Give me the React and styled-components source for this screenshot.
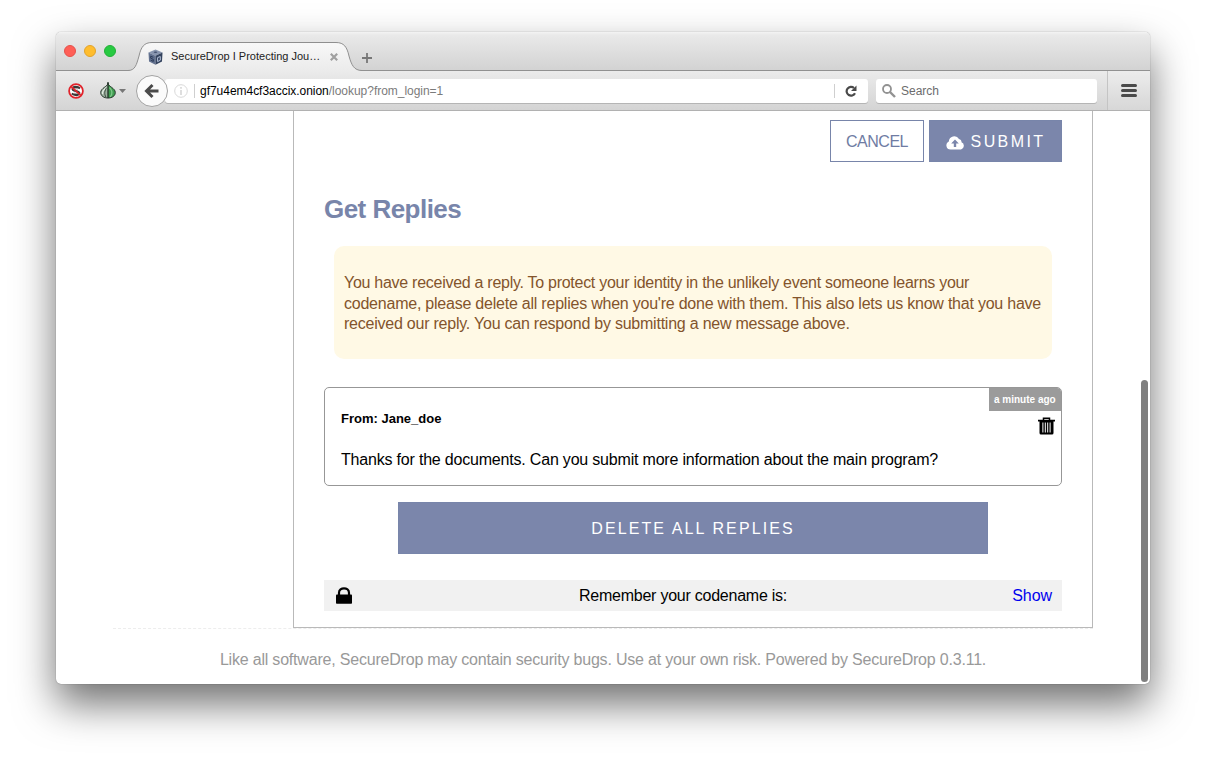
import React from "react";
import styled, { createGlobalStyle } from "styled-components";

const Global = createGlobalStyle`
  * { box-sizing: border-box; }
  html, body { margin: 0; height: 100%; background: #fff; overflow: hidden; }
  body { font-family: "Liberation Sans", Arial, sans-serif; }
  svg { display: block; flex: none; }
`;

const Desktop = styled.div`
  width: 1206px;
  height: 764px;
  padding: 32px 56px 0;
  overflow: hidden;
  background: #fff;
`;

const Window = styled.div`
  width: 1094px;
  height: 652px;
  display: flex;
  flex-direction: column;
  border-radius: 5px;
  background: #fff;
  box-shadow: 0 0 1px rgba(0, 0, 0, 0.55), 0 20px 40px rgba(0, 0, 0, 0.56);
  overflow: clip;
`;

const TitleBar = styled.div`
  height: 39px;
  flex: none;
  display: flex;
  padding-left: 8px;
  background: linear-gradient(#f3f3f3, #e9e9e9 8%, #d2d2d2);
  box-shadow: inset 0 -1px #919191;
`;

const Lights = styled.div`
  display: flex;
  gap: 8px;
  padding-top: 13px;
  width: 64px;
`;

const Light = styled.span`
  width: 12px;
  height: 12px;
  border-radius: 50%;
  background: ${(p) => p.$fill};
  border: 1px solid ${(p) => p.$edge};
`;

const Tab = styled.div`
  width: 234px;
  height: 39px;
  display: grid;
  > * { grid-area: 1 / 1; }
`;

const TabContent = styled.div`
  position: relative;
  display: flex;
  align-items: center;
  padding: 10px 0 0 20px;
  height: 39px;
  color: #222;
`;

const TabTitle = styled.span`
  width: 150px;
  margin-left: 8px;
  padding-bottom: 2px;
  white-space: nowrap;
  font-size: 11px;
`;

const CloseIcon = styled.svg`
  margin-left: 9px;
`;

const NewTab = styled.div`
  padding-top: 21px;
`;

const Toolbar = styled.div`
  height: 40px;
  flex: none;
  display: flex;
  align-items: center;
  padding-left: 12px;
  background: linear-gradient(#ebebeb, #d4d4d4);
  border-bottom: 1px solid #b1b1b1;
`;

const AddOns = styled.div`
  display: flex;
  align-items: center;
  gap: 16px;
  width: 68px;
`;

const AddOnMenu = styled.div`
  display: flex;
  align-items: center;
  gap: 3px;
`;

const BackButton = styled.div`
  position: relative;
  z-index: 1;
  width: 32px;
  height: 32px;
  flex: none;
  display: grid;
  place-items: center;
  border-radius: 50%;
  background: #fbfbfb;
  border: 1px solid #a3a3a3;
`;

const Field = styled.div`
  display: flex;
  align-items: center;
  height: 24px;
  width: ${(p) => p.$width}px;
  margin-left: ${(p) => p.$left}px;
  padding-left: ${(p) => p.$pad}px;
  background: #fff;
  border-radius: 3px;
  box-shadow: 0 1px 0 rgba(0, 0, 0, 0.16);
  font-size: 12px;
  color: ${(p) => p.$color || "#000"};
`;

const Divider = styled.span`
  width: 1px;
  height: 14px;
  margin-left: ${(p) => p.$left || 0}px;
  margin-right: ${(p) => p.$right || 0}px;
  background: #cfcfcf;
`;

const Url = styled.span`
  width: 639px;
  padding-left: 5px;
  white-space: nowrap;
  letter-spacing: -0.03px;
`;

const UrlPath = styled.span`
  color: #7b7b7b;
`;

const SearchText = styled.span`
  margin-left: 5px;
`;

const MenuButton = styled.div`
  height: 39px;
  width: 43px;
  margin-left: 10px;
  display: grid;
  place-items: center;
  border-left: 1px solid #c4c4c4;
  background: rgba(255, 255, 255, 0.08);
`;

const Viewport = styled.div`
  flex: 1;
  display: flex;
`;

const Page = styled.main`
  width: 980px;
  margin-left: 57px;
`;

const Panel = styled.section`
  width: 800px;
  height: 517px;
  margin-left: 180px;
  padding: 9px 30px 0;
  border: 1px solid #b9b9b9;
  border-top: 0;
`;

const Actions = styled.div`
  display: flex;
  justify-content: flex-end;
  gap: 5px;
`;

const Button = styled.button`
  height: ${(p) => p.$height || 42}px;
  width: ${(p) => p.$width}px;
  padding: 2px 0 0;
  display: flex;
  align-items: center;
  justify-content: center;
  border: 1px solid #7885aa;
  background: ${(p) => (p.$outline ? "#fff" : "#7b86ab")};
  color: ${(p) => (p.$outline ? "#6f7ca3" : "#fff")};
  font: 16px "Liberation Sans", Arial, sans-serif;
  letter-spacing: ${(p) => p.$spacing}px;
  gap: 6px;
`;

const Heading = styled.h2`
  margin: 32px 0 0;
  font-size: 26px;
  line-height: 30px;
  font-weight: 700;
  letter-spacing: -0.53px;
  color: #7885aa;
`;

const Notice = styled.div`
  margin: 22px 10px 0;
  height: 113px;
  padding: 27px 0 0 10px;
  border-radius: 10px;
  background: #fff9e5;
  color: #83542c;
  font-size: 16px;
  line-height: 20.5px;
`;

const TextLine = styled.div`
  white-space: nowrap;
  letter-spacing: ${(p) => p.$spacing}px;
`;

const Reply = styled.article`
  margin-top: 28px;
  height: 99px;
  display: flex;
  justify-content: space-between;
  border: 1px solid #979797;
  border-radius: 5px;
  overflow: hidden;
`;

const Message = styled.div`
  padding: 23px 0 0 16px;
`;

const Sender = styled.div`
  font-size: 13px;
  line-height: 16px;
  font-weight: 700;
  margin-bottom: 23px;
`;

const Body = styled.div`
  font-size: 16px;
  line-height: 20px;
  white-space: nowrap;
  letter-spacing: -0.194px;
`;

const Meta = styled.div`
  display: flex;
  flex-direction: column;
  align-items: flex-end;
`;

const Age = styled.div`
  height: 23px;
  width: 72px;
  padding-left: 5px;
  background: #9b9b9b;
  color: #fff;
  font-size: 10px;
  font-weight: 700;
  line-height: 23px;
  white-space: nowrap;
`;

const TrashSlot = styled.div`
  padding: 6px 6px 0 0;
`;

const Center = styled.div`
  display: flex;
  justify-content: center;
  margin-top: 16px;
`;

const Codename = styled.div`
  height: 31px;
  margin-top: 26px;
  padding: 0 10px 0 12px;
  display: flex;
  align-items: center;
  background: #f1f1f1;
  font-size: 16px;
`;

const Reminder = styled.span`
  flex: 1;
  padding-left: 227px;
  white-space: nowrap;
  letter-spacing: -0.24px;
`;

const ShowLink = styled.a`
  color: #0000ee;
  letter-spacing: -0.05px;
`;

const Footer = styled.footer`
  border-top: 1px dashed #ededed;
  padding-top: 21px;
  text-align: center;
  font-size: 16px;
  line-height: 20px;
  color: #999;
  letter-spacing: -0.198px;
`;

const ScrollThumb = styled.div`
  width: 7px;
  height: 302px;
  margin: 269px 0 0 48px;
  border-radius: 4px;
  background: #7f7f7f;
`;

const TabShape = () => (
  <svg width="235" height="39" viewBox="0 0 235 39">
    <defs>
      <linearGradient id="tab" x1="0" y1="0" x2="0" y2="1">
        <stop offset="0" stopColor="#f8f8f8" />
        <stop offset="1" stopColor="#ebebeb" />
      </linearGradient>
    </defs>
    <path d="M0 38.500C7 38.500 8.500 33 11 24C13 15 16 10.500 24 10.500H208C216 10.500 219 15 221 24C223.500 33 226 38.500 234 38.500V39H0Z" fill="url(#tab)" />
    <path d="M0 38.500C7 38.500 8.500 33 11 24C13 15 16 10.500 24 10.500H208C216 10.500 219 15 221 24C223.500 33 226 38.500 234 38.500" fill="none" stroke="#8f8f8f" />
  </svg>
);

const CubeIcon = () => (
  <svg width="15" height="16" viewBox="0 0 15 16">
    <path d="M7.500 0.500 14.500 3.500 7.500 6.800 0.500 3.500Z" fill="#8794ae" />
    <path d="M0.500 3.500 7.500 6.800V15.800L1 12.500Z" fill="#62718f" />
    <path d="M14.500 3.500 7.500 6.800V15.800L14 12.500Z" fill="#34435f" />
    <path d="M5.300 8.300 2.700 7.200V9.200L5.300 10.400V12.400L2.700 11.200" fill="none" stroke="#2c3a58" />
    <path d="M9.600 8.600V12.600L12.300 11.200V7.500Z" fill="none" stroke="#b4c1d8" />
    <ellipse cx="7.500" cy="3.300" rx="1.800" ry="0.800" fill="#45536f" />
  </svg>
);

const NoScriptIcon = () => (
  <svg width="16" height="16" viewBox="0 0 16 16">
    <circle cx="8" cy="8" r="6.800" fill="#fff" />
    <path d="M12 5.500C9.500 3.200 5 3.500 4.600 6S11 7.500 11.300 10 6.500 12.800 3.800 10.500" fill="none" stroke="#3a3a3a" strokeWidth="2.200" />
    <path d="M6 5.700 10 5.900M6 10.300 9.600 10.200" stroke="#8d8d8d" />
    <path d="M3.200 3.700 12.800 12.300" stroke="#e0232b" strokeWidth="1.800" />
    <circle cx="8" cy="8" r="6.900" fill="none" stroke="#e0232b" strokeWidth="1.800" />
  </svg>
);

const OnionIcon = () => (
  <svg width="16" height="17" viewBox="0 0 16 17">
    <path d="M8 1C8 4.500 0.700 6 0.700 10.500C0.700 14 4 16 8 16Z" fill="#9fb3a2" />
    <path d="M8 1C8 4.500 15.300 6 15.300 10.500C15.300 14 12 16 8 16Z" fill="#3f9d50" />
    <path d="M7 5C4 7.500 2 9 2.500 12" fill="none" stroke="#e3ebe3" strokeWidth="1.300" />
    <path d="M6.800 5.500C4.500 8.500 4 12 6 15.200" fill="none" stroke="#3a4a3d" />
    <path d="M9.500 5.500C12.500 8.500 12.500 12 10.300 15" fill="none" stroke="#7fc98a" strokeWidth="1.200" />
    <path d="M8 0V16" stroke="#1f2f24" strokeWidth="1.300" />
    <path d="M8 1C8 4.500 0.700 6 0.700 10.500C0.700 14 4 16 8 16S15.300 14 15.300 10.500C15.300 6 8 4.500 8 1Z" fill="none" stroke="#26362b" />
  </svg>
);

const BackArrow = () => (
  <svg width="16" height="16" viewBox="0 0 16 16">
    <path d="M8.500 2 2.500 8 8.500 14M3 8H14.500" fill="none" stroke="#4a4a4a" strokeWidth="3" />
  </svg>
);

const InfoIcon = () => (
  <svg width="14" height="14" viewBox="0 0 14 14">
    <circle cx="7" cy="7" r="6.300" fill="none" stroke="#d9d9d9" />
    <path d="M7 3V4.700M7 6V11" stroke="#d3d3d3" strokeWidth="1.500" />
  </svg>
);

const ReloadIcon = () => (
  <svg width="12" height="12" viewBox="0 0 12 12">
    <path d="M9 3A4.400 4.400 0 1 0 10 8.200" fill="none" stroke="#4a4a4a" strokeWidth="2.200" />
    <path d="M11.500 0.500V6H6Z" fill="#4a4a4a" />
  </svg>
);

const SearchIcon = () => (
  <svg width="14" height="14" viewBox="0 0 14 14">
    <circle cx="5" cy="5" r="4" fill="none" stroke="#929292" strokeWidth="1.800" />
    <path d="M8 8 13 13" stroke="#929292" strokeWidth="2.400" />
  </svg>
);

const CloudIcon = () => (
  <svg width="19" height="16" viewBox="0 0 19 16">
    <path d="M4.500 15.500A4.200 4.200 0 0 1 2.800 7.500 5.500 5.500 0 0 1 13 5 3 3 0 0 1 15.500 8.300 3.800 3.800 0 0 1 15 15.500Z" fill="#fff" />
    <path d="M9 5.500 12.800 9.500H10.200V13H7.800V9.500H5.200Z" fill="#7b86ab" />
  </svg>
);

const TrashIcon = () => (
  <svg width="17" height="18" viewBox="0 0 17 18">
    <path d="M5.500 3.500V1.300H11.500V3.500" fill="none" stroke="#000" strokeWidth="1.500" />
    <path d="M0 2.800H17V4.500H15.500V16Q15.500 17.500 14 17.500H3Q1.500 17.500 1.500 16V4.500H0Z" />
    <path d="M4.900 5.500V15.500M7.300 5.500V15.500M9.700 5.500V15.500M12.100 5.500V15.500" stroke="#fff" strokeWidth="1" />
  </svg>
);

const LockIcon = () => (
  <svg width="16" height="17" viewBox="0 0 16 17">
    <path d="M3 9V5.800C3 -0.200 13 -0.200 13 5.800V9" fill="none" stroke="#000" strokeWidth="2.200" />
    <rect y="7.500" width="16" height="9.300" rx="0.800" />
  </svg>
);

export default function App() {
  return (
    <Desktop>
      <Global />
      <Window>
        <TitleBar>
          <Lights>
            <Light $fill="#ff5f57" $edge="#e5514b" />
            <Light $fill="#ffbd2e" $edge="#e2a32b" />
            <Light $fill="#28ca42" $edge="#23b038" />
          </Lights>
          <Tab>
            <TabShape />
            <TabContent>
              <CubeIcon />
              <TabTitle>SecureDrop I Protecting Jou…</TabTitle>
              <CloseIcon width="8" height="8" viewBox="0 0 8 8">
                <path d="M0.800 0.800 7.200 7.200M7.200 0.800 0.800 7.200" stroke="#a0a0a0" strokeWidth="2.200" />
              </CloseIcon>
            </TabContent>
          </Tab>
          <NewTab>
            <svg width="10" height="10" viewBox="0 0 10 10">
              <path d="M5 0V10M0 5H10" stroke="#777" strokeWidth="1.800" />
            </svg>
          </NewTab>
        </TitleBar>
        <Toolbar>
          <AddOns>
            <NoScriptIcon />
            <AddOnMenu>
              <OnionIcon />
              <svg width="7" height="4" viewBox="0 0 7 4">
                <path d="M0 0H7L3.500 4Z" fill="#777" />
              </svg>
            </AddOnMenu>
          </AddOns>
          <BackButton><BackArrow /></BackButton>
          <Field $width={703} $left={-3} $pad={9}>
            <InfoIcon />
            <Divider $left={6} />
            <Url>gf7u4em4cf3accix.onion<UrlPath>/lookup?from_login=1</UrlPath></Url>
            <Divider $right={10} />
            <ReloadIcon />
          </Field>
          <Field $width={221} $left={8} $pad={6} $color="#6c6c6c">
            <SearchIcon />
            <SearchText>Search</SearchText>
          </Field>
          <MenuButton>
            <svg width="16" height="13" viewBox="0 0 16 13">
              <path d="M1.500 1.500H14.500M1.500 6.500H14.500M1.500 11.500H14.500" stroke="#4a4a4a" strokeWidth="3" strokeLinecap="round" />
            </svg>
          </MenuButton>
        </Toolbar>
        <Viewport>
          <Page>
            <Panel>
              <Actions>
                <Button $width={94} $outline $spacing={-0.5}>CANCEL</Button>
                <Button $width={133} $spacing={2.4}><CloudIcon />SUBMIT</Button>
              </Actions>
              <Heading>Get Replies</Heading>
              <Notice>
                <TextLine $spacing={-0.275}>You have received a reply. To protect your identity in the unlikely event someone learns your</TextLine>
                <TextLine $spacing={-0.226}>codename, please delete all replies when you're done with them. This also lets us know that you have</TextLine>
                <TextLine $spacing={-0.23}>received our reply. You can respond by submitting a new message above.</TextLine>
              </Notice>
              <Reply>
                <Message>
                  <Sender>From: Jane_doe</Sender>
                  <Body>Thanks for the documents. Can you submit more information about the main program?</Body>
                </Message>
                <Meta>
                  <Age>a minute ago</Age>
                  <TrashSlot><TrashIcon /></TrashSlot>
                </Meta>
              </Reply>
              <Center>
                <Button $width={590} $height={52} $spacing={2.1}>DELETE ALL REPLIES</Button>
              </Center>
              <Codename>
                <LockIcon />
                <Reminder>Remember your codename is:</Reminder>
                <ShowLink>Show</ShowLink>
              </Codename>
            </Panel>
            <Footer>Like all software, SecureDrop may contain security bugs. Use at your own risk. Powered by SecureDrop 0.3.11.</Footer>
          </Page>
          <ScrollThumb />
        </Viewport>
      </Window>
    </Desktop>
  );
}
